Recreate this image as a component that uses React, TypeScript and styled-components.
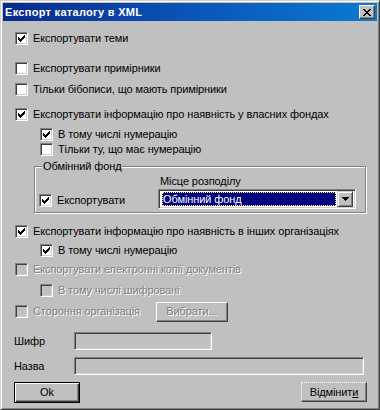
import React from 'react';
import styled, { createGlobalStyle, css } from 'styled-components';

const FACE = '#c0c0c0';

const Global = createGlobalStyle`
  html, body { margin: 0; padding: 0; background: ${FACE}; }
  body { font-family: "Liberation Sans", Arial, sans-serif; font-size: 11px; color: #000; letter-spacing: -0.1px; }
  * { box-sizing: border-box; }
`;

const Window = styled.div`
  width: 380px;
  height: 410px;
  background: ${FACE};
  border: 1px solid;
  border-color: #d4d0c8 #404040 #404040 #d4d0c8;
  box-shadow: inset 1px 1px 0 #fff, inset -1px -1px 0 #808080;
  padding: 2px;
  display: flex;
  flex-direction: column;
`;

const TitleBar = styled.div`
  height: 18px;
  flex: none;
  background: linear-gradient(to right, #0a2a8a 0%, #0a55b8 50%, #0a7ad2 100%);
  display: flex;
  align-items: center;
  justify-content: space-between;
  padding: 0 2px 0 2px;
  color: #fff;
  font-weight: bold;
  font-size: 11px;
  letter-spacing: 0.3px;
`;

const CloseButton = styled.div`
  width: 16px;
  height: 14px;
  background: ${FACE};
  border: 1px solid;
  border-color: #fff #404040 #404040 #fff;
  box-shadow: inset -1px -1px 0 #808080;
  display: flex;
  align-items: center;
  justify-content: center;
`;

const Body = styled.div`
  flex: 1;
  display: flex;
  flex-direction: column;
`;

const Row = styled.div<{ $top: number; $indent: number; $h?: number }>`
  display: flex;
  align-items: center;
  margin-top: ${(p) => p.$top}px;
  padding-left: ${(p) => p.$indent - 3}px;
  height: ${(p) => p.$h ?? 13}px;
  flex: none;
`;

const Box = styled.span<{ $disabled?: boolean }>`
  width: 13px;
  height: 13px;
  flex: none;
  display: inline-flex;
  align-items: center;
  justify-content: center;
  background: ${(p) => (p.$disabled ? FACE : '#fff')};
  border: 1px solid;
  border-color: #808080 #fff #fff #808080;
  box-shadow: inset 1px 1px 0 #404040, inset -1px -1px 0 #d4d0c8;
`;

const Label = styled.span<{ $disabled?: boolean }>`
  margin-left: 5px;
  line-height: 13px;
  white-space: nowrap;
  ${(p) =>
    p.$disabled &&
    css`
      color: #808080;
      text-shadow: 1px 1px 0 #fff;
    `}
`;

const Check = () => (
  <svg width="7" height="7" viewBox="0 0 7 7" shapeRendering="crispEdges">
    <rect x="0" y="2" width="1" height="3" fill="#000" />
    <rect x="1" y="3" width="1" height="3" fill="#000" />
    <rect x="2" y="4" width="1" height="3" fill="#000" />
    <rect x="3" y="3" width="1" height="3" fill="#000" />
    <rect x="4" y="2" width="1" height="3" fill="#000" />
    <rect x="5" y="1" width="1" height="3" fill="#000" />
    <rect x="6" y="0" width="1" height="3" fill="#000" />
  </svg>
);

const CheckBox: React.FC<{ checked?: boolean; disabled?: boolean; label: string }> = ({
  checked,
  disabled,
  label,
}) => (
  <>
    <Box $disabled={disabled}>{checked && <Check />}</Box>
    <Label $disabled={disabled}>{label}</Label>
  </>
);

const Group = styled.div`
  position: relative;
  margin: 10px 11px 0 31px;
  height: 47px;
  flex: none;
  border: 1px solid #808080;
  box-shadow: inset 1px 1px 0 #fff, 1px 1px 0 #fff;
  display: grid;
  grid-template-columns: 1fr 198px;
  padding: 0 9px 3px 4px;
`;

const Legend = styled.span`
  position: absolute;
  top: -7px;
  left: 7px;
  padding: 0 1px;
  background: ${FACE};
  line-height: 13px;
`;

const GroupLeft = styled.div`
  display: flex;
  align-items: center;
  align-self: end;
  height: 13px;
  margin-bottom: 2px;
`;

const GroupRight = styled.div`
  display: flex;
  flex-direction: column;
  justify-content: flex-end;
`;

const Caption = styled.div`
  line-height: 13px;
  padding-left: 2px;
  margin-bottom: 1px;
`;

const Combo = styled.div`
  height: 20px;
  display: flex;
  align-items: center;
  background: #fff;
  border: 1px solid;
  border-color: #808080 #fff #fff #808080;
  box-shadow: inset 1px 1px 0 #404040, inset -1px -1px 0 #d4d0c8;
  padding: 2px 2px 2px 3px;
`;

const Selected = styled.div`
  flex: 1;
  height: 14px;
  background: #000080;
  color: #fff;
  outline: 1px dotted #ffff80;
  outline-offset: -1px;
  padding-left: 1px;
  line-height: 14px;
  margin-right: 1px;
`;

const DropButton = styled.div`
  width: 16px;
  height: 16px;
  flex: none;
  background: ${FACE};
  border: 1px solid;
  border-color: #d4d0c8 #404040 #404040 #d4d0c8;
  box-shadow: inset 1px 1px 0 #fff, inset -1px -1px 0 #808080;
  display: flex;
  align-items: center;
  justify-content: center;
`;

const Button = styled.div<{ $width: number; $default?: boolean; $disabled?: boolean; $focus?: boolean }>`
  width: ${(p) => p.$width}px;
  height: ${(p) => (p.$default ? 21 : 20)}px;
  background: ${FACE};
  display: flex;
  align-items: center;
  justify-content: center;
  line-height: 13px;
  border: 1px solid;
  border-color: #fff #404040 #404040 #fff;
  box-shadow: inset -1px -1px 0 #808080;
  ${(p) =>
    p.$default &&
    css`
      border: 1px solid #000;
      box-shadow: inset 1px 1px 0 #fff, inset -1px -1px 0 #404040, inset -2px -2px 0 #808080;
    `}
  ${(p) =>
    p.$focus &&
    css`
      border-top: 1px dotted #fff;
      border-left: 1px dotted #fff;
    `}
  ${(p) =>
    p.$disabled &&
    css`
      color: #808080;
      text-shadow: 1px 1px 0 #fff;
    `}
`;

const FieldRow = styled.div<{ $top: number }>`
  display: flex;
  align-items: center;
  margin-top: ${(p) => p.$top}px;
  padding-left: 11px;
  height: 18px;
  flex: none;
`;

const FieldLabel = styled.span`
  width: 60px;
  flex: none;
`;

const Field = styled.div<{ $width: number }>`
  width: ${(p) => p.$width}px;
  height: 18px;
  background: ${FACE};
  border: 1px solid;
  border-color: #808080 #fff #fff #808080;
  box-shadow: inset 1px 1px 0 #404040, inset -1px -1px 0 #d4d0c8;
`;

const Footer = styled.div`
  display: flex;
  justify-content: space-between;
  margin-top: 7px;
  padding: 0 10px 0 11px;
  flex: none;
`;

const Under = styled.span`
  text-decoration: underline;
`;

const Spacer = styled.span<{ $w: number }>`
  width: ${(p) => p.$w}px;
  flex: none;
`;

export default function App() {
  return (
    <>
      <Global />
      <Window>
        <TitleBar>
          <span>Експорт каталогу в XML</span>
          <CloseButton>
            <svg width="8" height="7" viewBox="0 0 8 7" shapeRendering="crispEdges">
              <path d="M0 0h2v1h-2z M6 0h2v1h-2z M1 1h2v1h-2z M5 1h2v1h-2z M2 2h4v1h-4z M3 3h2v1h-2z M2 4h4v1h-4z M1 5h2v1h-2z M5 5h2v1h-2z M0 6h2v1h-2z M6 6h2v1h-2z" fill="#000" />
            </svg>
          </CloseButton>
        </TitleBar>
        <Body>
          <Row $top={11} $indent={15}>
            <CheckBox checked label="Експортувати теми" />
          </Row>
          <Row $top={17} $indent={15}>
            <CheckBox label="Експортувати примірники" />
          </Row>
          <Row $top={8} $indent={15}>
            <CheckBox label="Тільки бібописи, що мають примірники" />
          </Row>
          <Row $top={12} $indent={15}>
            <CheckBox checked label="Експортувати інформацію про наявність у власних фондах" />
          </Row>
          <Row $top={7} $indent={40}>
            <CheckBox checked label="В тому числі нумерацію" />
          </Row>
          <Row $top={2} $indent={40}>
            <CheckBox label="Тільки ту, що має нумерацію" />
          </Row>
          <Group>
            <Legend>Обмінний фонд</Legend>
            <GroupLeft>
              <CheckBox checked label="Експортувати" />
            </GroupLeft>
            <GroupRight>
              <Caption>Місце розподілу</Caption>
              <Combo>
                <Selected>Обмінний фонд</Selected>
                <DropButton>
                  <svg width="7" height="4" viewBox="0 0 7 4" shapeRendering="crispEdges">
                    <path d="M0 0h7v1h-7z M1 1h5v1h-5z M2 2h3v1h-3z M3 3h1v1h-1z" fill="#000" />
                  </svg>
                </DropButton>
              </Combo>
            </GroupRight>
          </Group>
          <Row $top={12} $indent={15}>
            <CheckBox checked label="Експортувати інформацію про наявність в інших організаціях" />
          </Row>
          <Row $top={6} $indent={40}>
            <CheckBox checked label="В тому числі нумерацію" />
          </Row>
          <Row $top={6} $indent={15}>
            <CheckBox disabled label="Експортувати електронні копії документів" />
          </Row>
          <Row $top={8} $indent={40}>
            <CheckBox disabled label="В тому числі шифровані" />
          </Row>
          <Row $top={4} $indent={15} $h={21}>
            <CheckBox disabled label="Стороння організація" />
            <Spacer $w={16} />
            <Button $width={72} $disabled>
              Вибрати...
            </Button>
          </Row>
          <FieldRow $top={10}>
            <FieldLabel>Шифр</FieldLabel>
            <Field $width={138} />
          </FieldRow>
          <FieldRow $top={7}>
            <FieldLabel>Назва</FieldLabel>
            <Field $width={290} />
          </FieldRow>
          <Footer>
            <Button $width={66} $default>
              Ok
            </Button>
            <Button $width={66} $focus>
              <span>
                Відмінит<Under>и</Under>
              </span>
            </Button>
          </Footer>
        </Body>
      </Window>
    </>
  );
}
